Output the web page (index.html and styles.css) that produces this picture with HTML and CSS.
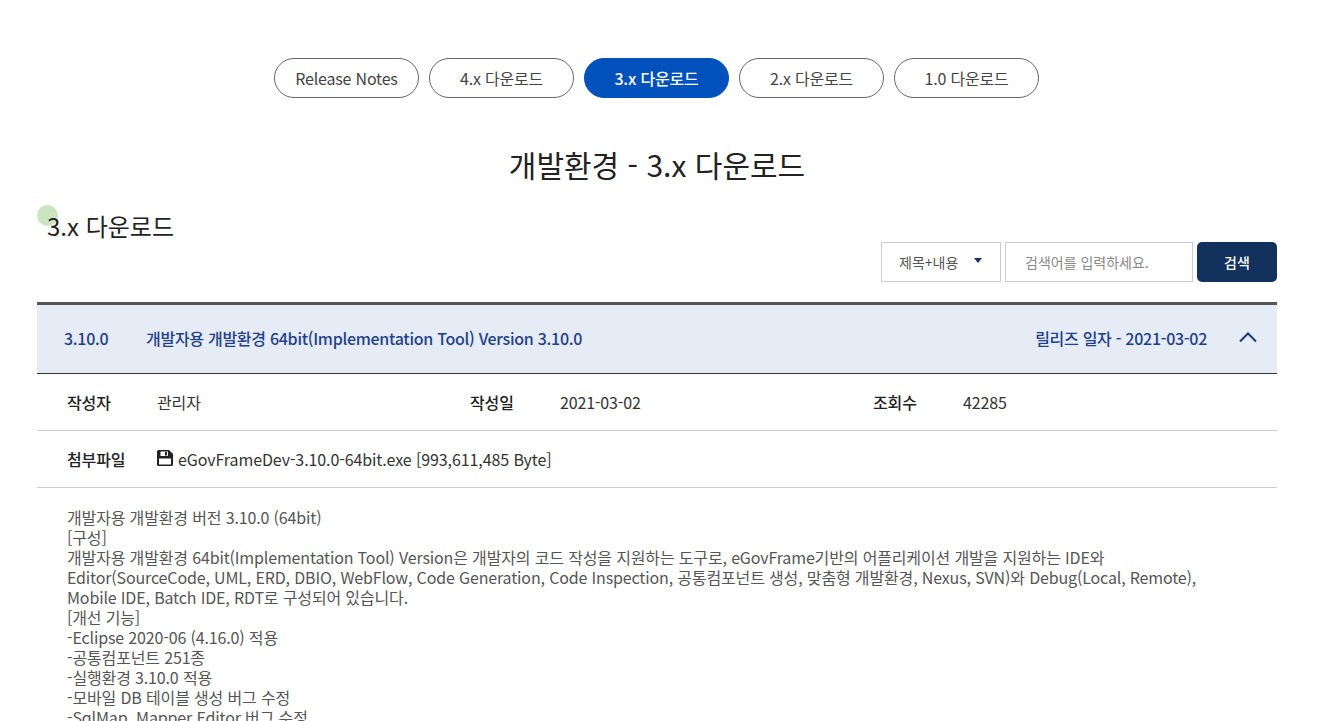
FILE: index.html
```html
<!DOCTYPE html>
<html lang="ko">
<head>
  <meta charset="UTF-8" />
  <title>개발환경 - 3.x 다운로드</title>
  <link rel="stylesheet" href="styles.css">
</head>
<body>
  <div class="wrap">
    <ul class="tabs">
      <li>Release Notes</li>
      <li>4.x 다운로드</li>
      <li class="on">3.x 다운로드</li>
      <li>2.x 다운로드</li>
      <li>1.0 다운로드</li>
    </ul>

    <h1 class="page-title">개발환경 - 3.x 다운로드</h1>

    <h2 class="sub-title"><span class="dot"></span><span class="sub-text">3.x 다운로드</span></h2>

    <form class="search">
      <div class="search-select">제목+내용<span class="caret"></span></div>
      <div class="search-input">검색어를 입력하세요.</div>
      <button type="button" class="search-btn">검색</button>
    </form>

    <div class="board">
      <div class="board-head">
        <span class="ver">3.10.0</span>
        <span class="name">개발자용 개발환경 64bit(Implementation Tool) Version 3.10.0</span>
        <span class="release">릴리즈 일자 - 2021-03-02</span>
        <svg class="chevron" width="20" height="12" viewBox="0 0 20 12"><path d="M2 10.5 10 2.5 18 10.5" fill="none" stroke="#1b3a7a" stroke-width="2"/></svg>
      </div>
      <div class="info-row">
        <div class="info-cell"><b>작성자</b><span>관리자</span></div>
        <div class="info-cell"><b>작성일</b><span>2021-03-02</span></div>
        <div class="info-cell"><b>조회수</b><span>42285</span></div>
      </div>
      <div class="info-row file-row">
        <b>첨부파일</b>
        <svg class="save" width="16" height="16" viewBox="0 0 16 16"><path d="M1.500 0H12L16 4V14.500A1.500 1.500 0 0 1 14.500 16H1.500A1.500 1.500 0 0 1 0 14.500V1.500A1.500 1.500 0 0 1 1.500 0Z" fill="#222"/><rect x="3.500" y="1.500" width="7.500" height="4.500" fill="#fff"/><rect x="8" y="2" width="2" height="3.500" fill="#222"/><rect x="2" y="8.500" width="12" height="6" fill="#fff"/></svg>
        <span>eGovFrameDev-3.10.0-64bit.exe [993,611,485 Byte]</span>
      </div>
      <div class="content">
        개발자용 개발환경 버전 3.10.0 (64bit)<br>
        [구성]<br>
        개발자용 개발환경 64bit(Implementation Tool) Version은 개발자의 코드 작성을 지원하는 도구로, eGovFrame기반의 어플리케이션 개발을 지원하는 IDE와<br>
        Editor(SourceCode, UML, ERD, DBIO, WebFlow, Code Generation, Code Inspection, 공통컴포넌트 생성, 맞춤형 개발환경, Nexus, SVN)와 Debug(Local, Remote),<br>
        Mobile IDE, Batch IDE, RDT로 구성되어 있습니다.<br>
        [개선 기능]<br>
        -Eclipse 2020-06 (4.16.0) 적용<br>
        -공통컴포넌트 251종<br>
        -실행환경 3.10.0 적용<br>
        -모바일 DB 테이블 생성 버그 수정<br>
        -SqlMap, Mapper Editor 버그 수정
      </div>
    </div>
  </div>
</body>
</html>
```

FILE: styles.css
```css
html, body {
  height: 721px;
  overflow: hidden;
}

body {
  margin: 0;
  font-family: "Noto Sans CJK KR", "Noto Sans", sans-serif;
  font-size: 16px;
  letter-spacing: -0.15px;
  color: #222;
  background-color: #fff;
}

.wrap {
  width: 1240px;
  margin-left: 37px;
  padding-top: 58px;
}

.tabs {
  display: flex;
  justify-content: center;
  gap: 10px;
  margin: 0;
  padding: 0 1px 0 0;
  list-style: none;
}

.tabs li {
  box-sizing: border-box;
  width: 145px;
  height: 40px;
  line-height: 38px;
  text-align: center;
  font-size: 16px;
  color: #444;
  border: 1px solid #666;
  border-radius: 20px;
  letter-spacing: -0.2px;
}

.tabs li.on {
  background-color: #0051bc;
  border-color: #0051bc;
  color: #fff;
  font-weight: 500;
}

.page-title {
  margin: 44px 0 0;
  text-align: center;
  font-size: 30px;
  line-height: 44px;
  font-weight: 400;
  letter-spacing: 0;
  color: #222;
}

.sub-title {
  position: relative;
  margin: 22px 0 0;
  padding-left: 10px;
  font-size: 24px;
  line-height: 36px;
  font-weight: 400;
  letter-spacing: 0;
  color: #222;
}

.dot {
  position: absolute;
  left: 0;
  top: -3px;
  width: 21px;
  height: 21px;
  border-radius: 50%;
  background-color: #cbe5c3;
}

.sub-text {
  position: relative;
}

.search {
  display: flex;
  justify-content: flex-end;
  gap: 4px;
  margin-top: -2px;
}

.search-select, .search-input {
  box-sizing: border-box;
  height: 40px;
  line-height: 38px;
  font-size: 14px;
  letter-spacing: 0;
  border: 1px solid #ccc;
}

.search-select {
  display: flex;
  align-items: center;
  width: 120px;
  padding-left: 17px;
  color: #555;
}

.caret {
  margin-left: 16px;
  margin-top: -3px;
  border-top: 5px solid #1b3358;
  border-left: 4px solid transparent;
  border-right: 4px solid transparent;
}

.search-input {
  width: 188px;
  padding-left: 19px;
  color: #888;
}

.search-btn {
  width: 80px;
  height: 40px;
  padding: 0;
  border: none;
  border-radius: 5px;
  background-color: #12315c;
  color: #fff;
  font-family: inherit;
  font-size: 14px;
  font-weight: 500;
}

.board {
  margin-top: 20px;
  border-top: 3px solid #555;
}

.board-head {
  display: flex;
  align-items: center;
  box-sizing: border-box;
  height: 69px;
  padding: 0 19px 2px 27px;
  background-color: #e6ecf5;
  border-bottom: 1px solid #333;
  font-size: 16px;
  font-weight: 500;
  color: #21408a;
  letter-spacing: -0.28px;
}

.ver {
  width: 82px;
}

.name {
  flex: 1;
}

.chevron {
  margin: -3px 0 0 31px;
}

.info-row {
  display: flex;
  align-items: center;
  height: 56px;
  padding: 0 30px;
  border-bottom: 1px solid #ccc;
}

.info-cell {
  display: flex;
  flex: none;
  width: 403px;
}

.info-row b {
  width: 90px;
  font-weight: 500;
  color: #222;
}

.info-row span {
  color: #333;
}

.file-row {
  letter-spacing: -0.1px;
}

.save {
  margin: -2px 5px 0 0;
}

.content {
  padding: 19px 30px;
  line-height: 20px;
  color: #555;
}
```
